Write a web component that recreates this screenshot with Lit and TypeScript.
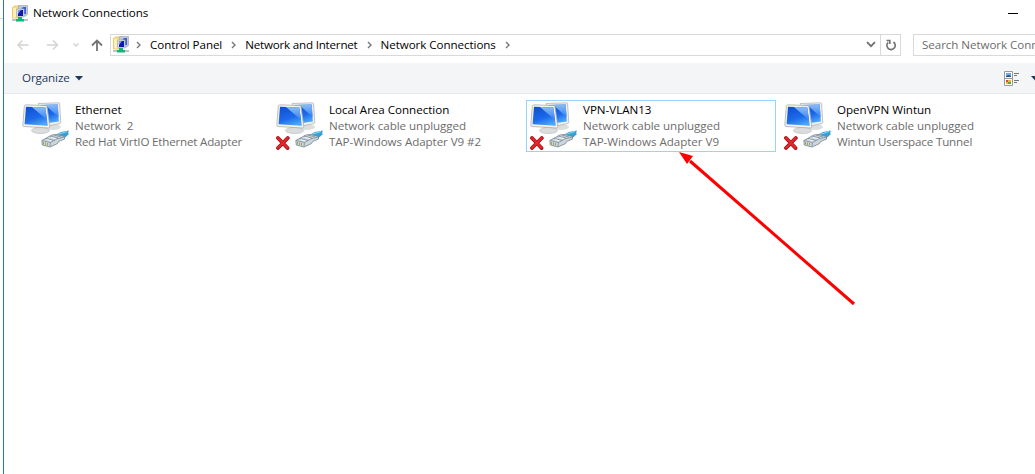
import { LitElement, html, css, svg, nothing } from "lit";
import { customElement, property } from "lit/decorators.js";

const folderIcon = html`<svg width="16" height="17" viewBox="0 0 16 17">
  <path d="M.5 2.500l2-1.500h5v12h-7z" fill="#f6dd7f" stroke="#dfc160" stroke-width=".8"/>
  <path d="M1 3h3v9.500H1z" fill="#fdf0b4"/>
  <path d="M6.500 .5h9v9l-2 1.500h-7z" fill="#c3c8d2" stroke="#a4a9b4" stroke-width=".7"/>
  <path d="M8 2h6v7H8z" fill="#3b5fd4"/><path d="M8 2h3L8 6z" fill="#a9c2f5"/>
  <path d="M4.500 4h7.500v8H5.500l-1-1z" fill="#d7dae2" stroke="#a9adb9" stroke-width=".7"/>
  <path d="M6 5h5v6H6z" fill="#0c19b4"/><path d="M6 5h3L6 9z" fill="#7f9df0"/>
  <path d="M0 14h16v2H0z" fill="#bfc3c5"/>
  <path d="M6 12h4v2h2v2.500H4V14h2z" fill="#14b578"/>
</svg>`;

interface Connection {
  name: string;
  status: string;
  device: string;
  tracking: number;
  unplugged: boolean;
  selected?: boolean;
}

const connections: Connection[] = [
  { name: "Ethernet", status: "Network\u00a0 2", device: "Red Hat VirtIO Ethernet Adapter", tracking: -0.19, unplugged: false },
  { name: "Local Area Connection", status: "Network cable unplugged", device: "TAP-Windows Adapter V9 #2", tracking: -0.07, unplugged: true },
  { name: "VPN-VLAN13", status: "Network cable unplugged", device: "TAP-Windows Adapter V9", tracking: -0.03, unplugged: true, selected: true },
  { name: "OpenVPN Wintun", status: "Network cable unplugged", device: "Wintun Userspace Tunnel", tracking: -0.15, unplugged: true },
];

const crumbs = [
  { label: "Control Panel", tracking: -0.07 },
  { label: "Network and Internet", tracking: -0.2 },
  { label: "Network Connections", tracking: -0.06 },
];

@customElement("adapter-icon")
export class AdapterIcon extends LitElement {
  static styles = css`
    :host { display: block; width: 48px; height: 48px; }
    svg { display: block; }
  `;
  @property({ type: Boolean }) unplugged = false;

  render() {
    return html`<svg width="48" height="48" viewBox="0 0 48 48">
      <defs>
        <linearGradient id="screen" x1="0.2" y1="0" x2="0.6" y2="1">
          <stop offset="0" stop-color="#0f4fd6"/><stop offset="0.6" stop-color="#1c6aea"/><stop offset="1" stop-color="#4ba6fb"/>
        </linearGradient>
        <linearGradient id="gloss" x1="0" y1="0" x2="0" y2="1">
          <stop offset="0" stop-color="#8cbcf8"/><stop offset="1" stop-color="#3180ee"/>
        </linearGradient>
      </defs>
      <ellipse cx="32" cy="25" rx="8" ry="3" fill="#dcdedf"/>
      <path d="M17 1.500L37.500 .8Q38.500 .8 38.600 2L39.800 20Q39.800 21.500 38 21.800L27 24z" fill="#efefec" stroke="#b4b6b6" stroke-width=".8"/>
      <path d="M19 3L36.700 2.500L37.800 19.500L27 21z" fill="url(#screen)"/>
      <path d="M24 2.800L36.700 2.500L37.500 15z" fill="url(#gloss)"/>
      <path d="M14 23l9-1 1 6-9 1z" fill="#b4b8bb"/>
      <ellipse cx="19.500" cy="28.500" rx="9" ry="3" fill="#dadcde" stroke="#bcbfc1" stroke-width=".7"/>
      <path d="M4.500 2.800L24.500 3.500Q25.800 3.500 26 4.800L28.800 24.500Q28.800 26 27.500 26L3 24.500Q1.700 24.500 1.800 23L3.300 4z" fill="#f2f2ef" stroke="#acafb0" stroke-width=".8"/>
      <path d="M5 4.800L24.300 5.500L26.800 23.800L3.600 22.300z" fill="url(#screen)"/>
      <path d="M11 5L24.300 5.500L26 18z" fill="url(#gloss)"/>
      <path d="M33 33.500l7-3.500 8-1.500-1 2.500 1 1-5 4.500-4-2z" fill="#35a0d6"/>
      <path d="M35 33l11-3.500" stroke="#8ad9f3"/>
      <path d="M20.800 38.500l10-5.500 5-.5 7.500 2 .3 2.500-6 2.500-1 2-7.600 3.500-7.700-2z" fill="#cdd6dd" stroke="#748491" stroke-width=".8"/>
      <path d="M21 38.500l8.500 2-.5 4M29.500 40.500l6-3.500 8-2M25 36.500l8.500 2M29 34l8 2M33 33l7 2" fill="none" stroke="#7c8c99" stroke-width=".8"/>
      <path d="M30 35.500l5 1.200M26 37.800l4.500 1" stroke="#f3f6f8"/>
      <path d="M22.500 40v2.500M24.500 40.500v2.500M26.500 41v2.500" stroke="#a3a352"/>
      ${this.unplugged
        ? svg`<path d="M3 36L12.500 46M12.800 36L3 46" stroke="#a90f13" stroke-width="3.800" stroke-linecap="round"/>
              <path d="M3.100 36.100L12.300 45.700M12.600 36.100L3.100 45.700" stroke="#e0282e" stroke-width="2.200" stroke-linecap="round"/>`
        : nothing}
    </svg>`;
  }
}

@customElement("app-root")
export class AppRoot extends LitElement {
  static styles = css`
    :host { display: block; position: relative; width: 1035px; height: 474px; overflow: hidden; background: #fff;
      font: 11.6px/16px "Open Sans", sans-serif; color: #000; }
    * { box-sizing: border-box; }
    svg { display: block; flex: none; }
    .frame { display: flex; height: 474px; }
    .behind { flex: none; width: 3px; height: 19px; border-bottom: 1px solid #d8d8d8; }
    .window { flex: none; width: 1032px; height: 474px; border-left: 1px solid #2878b8; }
    .title { display: flex; align-items: center; height: 26px; padding: 0 17px 0 8px; }
    .title span { margin-left: 5px; flex: 1; letter-spacing: -0.06px; }
    .nav { display: flex; align-items: center; height: 37px; }
    .history { display: flex; flex: none; align-items: center; width: 106px; padding-left: 12px; height: 22px; }
    .address { display: flex; align-items: center; width: 791px; height: 22px; border: 1px solid #d9d9d9; padding-left: 2px; flex: none; }
    .address > svg:first-child { margin-right: 7px; }
    .crumb { margin-left: 9px; white-space: nowrap; }
    .crumb + svg { margin-left: 9px; }
    .tail { margin-left: auto; display: flex; height: 20px; align-items: center; }
    .refresh { width: 20px; height: 20px; margin-left: 4px; border-left: 1px solid #d9d9d9; display: flex; align-items: center; justify-content: center; }
    .search { margin-left: 12px; height: 22px; width: 140px; flex: none; border: 1px solid #d9d9d9; padding: 2px 0 0 8px; color: #6d6d6d; white-space: nowrap; letter-spacing: -0.06px; }
    .tools { display: flex; align-items: center; height: 31px; background: #f4f5f7; border-bottom: 1px solid #e6e8eb; color: #1e395b; padding-left: 18px; }
    .tools span { margin-right: 5px; letter-spacing: -0.1px; }
    .view { margin-left: auto; display: flex; align-items: center; gap: 11px; width: 31px; }
    .items { display: grid; grid-template-columns: repeat(4, 250px); gap: 4px; padding: 6px 0 0 14px; }
    .item { display: flex; height: 52px; border: 1px solid transparent; padding: 1px 0 0 2px; white-space: nowrap; }
    .item.selected { border-color: #99d1ff; }
    .labels { margin-left: 6px; color: #6d6d6d; letter-spacing: -0.05px; }
    .name { color: #000; letter-spacing: -0.02px; }
    .arrow { position: absolute; left: 670px; top: 145px; }
  `;

  private chevron() {
    return html`<svg width="5" height="8" viewBox="0 0 5 8"><path d="M1 1l3 3-3 3" fill="none" stroke="#777" stroke-width="1.400"/></svg>`;
  }

  render() {
    return html`
      <div class="frame">
        <div class="behind"></div>
        <div class="window">
          <div class="title">${folderIcon}<span>Network Connections</span>
            <svg width="10" height="1"><path d="M0 0h10v1H0z"/></svg>
          </div>
          <div class="nav">
            <div class="history">
              <svg width="88" height="14" viewBox="0 0 88 14" fill="none">
                <path d="M12.500 7H2M6.500 2.500L2 7l4.500 4.500M31 7h10.500M37 2.500L41.500 7 37 11.500" stroke="#d2d2d2" stroke-width="1.400"/>
                <path d="M57.500 5.500l2.500 2.500 2.500-2.500" stroke="#d2d2d2" stroke-width="1.500"/>
                <path d="M81 13V3M76 7.500L81 2.500 86 7.500" stroke="#747474" stroke-width="1.800"/>
              </svg>
            </div>
            <div class="address">
              ${folderIcon}
              ${this.chevron()}
              ${crumbs.map(
                (c) => html`<span class="crumb" style="letter-spacing:${c.tracking}px">${c.label}</span>${this.chevron()}`)}
              <div class="tail">
                <svg width="10" height="7" viewBox="0 0 10 7"><path d="M1 1.200l4 4 4-4" fill="none" stroke="#707070" stroke-width="1.800"/></svg>
                <div class="refresh"><svg width="12" height="12" viewBox="0 0 12 12" fill="none" stroke="#707070" stroke-width="1.600"><path d="M8.500 3A4.200 4.200 0 1 1 3.200 3.300M1.500 1.500h3.300v3.500"/></svg></div>
              </div>
            </div>
            <div class="search">Search Network Connections</div>
          </div>
          <div class="tools">
            <span>Organize</span>
            <svg width="8" height="5"><path d="M0 0h8L4 4.500z" fill="#1e395b"/></svg>
            <div class="view">
              <svg width="16" height="15" viewBox="0 0 16 15">
                <path d="M.5 .5h8v14h-8zM.5 7.500h8" fill="#fff" stroke="#999"/>
                <path d="M2 2h5v4H2z" fill="#74a9e6"/><path d="M2 5l3-1 2 1v1H2z" fill="#24548a"/>
                <path d="M2 9h5v4H2z" fill="#e7b93d"/><path d="M2 9h2v2H2z" fill="#d64c32"/><path d="M4 11h3v2H4z" fill="#57a446"/>
                <path d="M10 2.500h5M10 4.500h3M10 9.500h5M10 11.500h3" stroke="#777"/>
              </svg>
              <svg width="8" height="5"><path d="M0 0h8L4 4.500z" fill="#1e395b"/></svg>
            </div>
          </div>
          <div class="items">
            ${connections.map((c) => html`
              <div class="item ${c.selected ? "selected" : ""}">
                <adapter-icon ?unplugged=${c.unplugged}></adapter-icon>
                <div class="labels"><div class="name">${c.name}</div><div>${c.status}</div><div style="letter-spacing:${c.tracking}px">${c.device}</div></div>
              </div>`)}
          </div>
        </div>
      </div>
      <svg class="arrow" width="190" height="165" viewBox="0 0 190 165">
        <path d="M20 16L184 159" stroke="#f00" stroke-width="3"/>
        <path d="M9 7l14 4-3 4-3 4z" fill="#f00"/>
      </svg>`;
  }
}
